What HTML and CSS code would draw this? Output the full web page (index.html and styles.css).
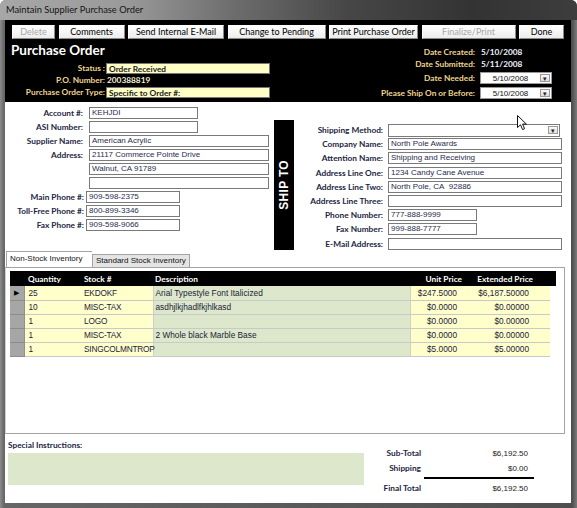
FILE: index.html
```html
<!DOCTYPE html>
<html lang="en">
<head>
    <meta charset="UTF-8" />
    <title>Maintain Supplier Purchase Order</title>
    <link rel="stylesheet" href="styles.css">
</head>
<body>
<div class="window">
    <div class="titlebar">Maintain Supplier Purchase Order</div>
    <div class="client">
        <div class="header">
            <div class="toolbar">
                <button class="btn b-delete" disabled>Delete</button>
                <button class="btn b-comments">Comments</button>
                <button class="btn b-mail">Send Internal E-Mail</button>
                <button class="btn b-pending">Change to Pending</button>
                <button class="btn b-print">Print Purchase Order</button>
                <button class="btn b-final" disabled>Finalize/Print</button>
                <button class="btn b-done">Done</button>
            </div>
            <div class="header-main">
                <div class="po-left">
                    <h1>Purchase Order</h1>
                    <div class="hgrid">
                        <span class="hlabel">Status :</span>
                        <span class="hfield">Order Received</span>
                        <span class="hlabel">P.O. Number:</span>
                        <span class="hvalue">200388819</span>
                        <span class="hlabel">Purchase Order Type:</span>
                        <span class="hfield">Specific to Order #:</span>
                    </div>
                </div>
                <div class="po-dates">
                    <span class="hlabel">Date Created:</span>
                    <span class="dvalue">5/10/2008</span>
                    <span class="hlabel">Date Submitted:</span>
                    <span class="dvalue">5/11/2008</span>
                    <span class="hlabel">Date Needed:</span>
                    <span class="dcombo"><span class="dtext">5/10/2008</span><span class="dd">&#9662;</span></span>
                    <span class="hlabel">Please Ship On or Before:</span>
                    <span class="dcombo"><span class="dtext">5/10/2008</span><span class="dd">&#9662;</span></span>
                </div>
            </div>
        </div>

        <div class="form-body">
            <div class="supplier">
                <div class="row"><span class="lbl">Account #:</span><span class="fld w-sm">KEHJDI</span></div>
                <div class="row"><span class="lbl">ASI Number:</span><span class="fld w-sm"></span></div>
                <div class="row"><span class="lbl">Supplier Name:</span><span class="fld w-lg">American Acrylic</span></div>
                <div class="row"><span class="lbl">Address:</span><span class="fld w-lg">21117 Commerce Pointe Drive</span></div>
                <div class="row"><span class="lbl"></span><span class="fld w-lg">Walnut, CA 91789</span></div>
                <div class="row"><span class="lbl"></span><span class="fld w-lg"></span></div>
                <div class="row phone"><span class="lbl">Main Phone #:</span><span class="fld w-ph">909-598-2375</span></div>
                <div class="row phone"><span class="lbl">Toll-Free Phone #:</span><span class="fld w-ph">800-899-3346</span></div>
                <div class="row phone"><span class="lbl">Fax Phone #:</span><span class="fld w-ph">909-598-9066</span></div>
            </div>
            <div class="shipbar"><span>SHIP TO</span></div>
            <div class="shipto">
                <div class="row"><span class="lbl">Shipping Method:</span><span class="fld w-xl combo"><span class="dtext"></span><span class="dd">&#9662;</span></span></div>
                <div class="row"><span class="lbl">Company Name:</span><span class="fld w-xl">North Pole Awards</span></div>
                <div class="row"><span class="lbl">Attention Name:</span><span class="fld w-xl">Shipping and Receiving</span></div>
                <div class="row"><span class="lbl">Address Line One:</span><span class="fld w-xl">1234 Candy Cane Avenue</span></div>
                <div class="row"><span class="lbl">Address Line Two:</span><span class="fld w-xl">North Pole, CA&nbsp; 92886</span></div>
                <div class="row"><span class="lbl">Address Line Three:</span><span class="fld w-xl"></span></div>
                <div class="row"><span class="lbl">Phone Number:</span><span class="fld w-ph2">777-888-9999</span></div>
                <div class="row"><span class="lbl">Fax Number:</span><span class="fld w-ph2">999-888-7777</span></div>
                <div class="row"><span class="lbl">E-Mail Address:</span><span class="fld w-xl"></span></div>
            </div>
        </div>

        <div class="tabs">
            <div class="tab active">Non-Stock Inventory</div>
            <div class="tab">Standard Stock Inventory</div>
        </div>
        <div class="panel">
            <table class="grid">
                <thead>
                    <tr>
                        <th class="c-sel"></th>
                        <th class="c-qty">Quantity</th>
                        <th class="c-stock">Stock #</th>
                        <th class="c-desc">Description</th>
                        <th class="c-unit">Unit Price</th>
                        <th class="c-ext">Extended Price</th>
                        <th class="c-pad"></th>
                    </tr>
                </thead>
                <tbody>
                    <tr>
                        <td class="c-sel current">&#9654;</td>
                        <td class="c-qty">25</td>
                        <td class="c-stock">EKDOKF</td>
                        <td class="c-desc">Arial Typestyle Font Italicized</td>
                        <td class="c-unit">$247.5000</td>
                        <td class="c-ext">$6,187.50000</td>
                        <td class="c-pad"></td>
                    </tr>
                    <tr>
                        <td class="c-sel"></td>
                        <td class="c-qty">10</td>
                        <td class="c-stock">MISC-TAX</td>
                        <td class="c-desc">asdhjlkjhadlfkjhlkasd</td>
                        <td class="c-unit">$0.0000</td>
                        <td class="c-ext">$0.00000</td>
                        <td class="c-pad"></td>
                    </tr>
                    <tr>
                        <td class="c-sel"></td>
                        <td class="c-qty">1</td>
                        <td class="c-stock">LOGO</td>
                        <td class="c-desc"></td>
                        <td class="c-unit">$0.0000</td>
                        <td class="c-ext">$0.00000</td>
                        <td class="c-pad"></td>
                    </tr>
                    <tr>
                        <td class="c-sel"></td>
                        <td class="c-qty">1</td>
                        <td class="c-stock">MISC-TAX</td>
                        <td class="c-desc">2 Whole black Marble Base</td>
                        <td class="c-unit">$0.0000</td>
                        <td class="c-ext">$0.00000</td>
                        <td class="c-pad"></td>
                    </tr>
                    <tr>
                        <td class="c-sel"></td>
                        <td class="c-qty">1</td>
                        <td class="c-stock">SINGCOLMNTROP</td>
                        <td class="c-desc"></td>
                        <td class="c-unit">$5.0000</td>
                        <td class="c-ext">$5.00000</td>
                        <td class="c-pad"></td>
                    </tr>
                </tbody>
            </table>
        </div>

        <div class="footer">
            <div class="instructions">
                <div class="lbl-plain">Special Instructions:</div>
                <div class="notes"></div>
            </div>
            <div class="totals">
                <span class="tlabel">Sub-Total</span><span class="tvalue">$6,192.50</span>
                <span class="tlabel">Shipping</span><span class="tvalue">$0.00</span>
                <span class="rule"></span>
                <span class="tlabel">Final Total</span><span class="tvalue">$6,192.50</span>
            </div>
        </div>
    </div>

    <!-- mouse pointer -->
    <svg class="cursor" width="12" height="17" viewBox="0 0 12 17">
        <path d="M0.5 0.5 L0.5 12.5 L3.5 9.8 L5.6 14.6 L7.6 13.7 L5.6 9.1 L9.4 9.1 Z" fill="#fff" stroke="#111" stroke-width="1"/>
    </svg>
</div>
</body>
</html>
```

FILE: styles.css
```css
* {
    box-sizing: border-box;
}

html, body {
    margin: 0;
    padding: 0;
}

body {
    width: 577px;
    height: 508px;
    overflow: hidden;
    background: #ffffff;
    font-family: "Liberation Sans", Arial, sans-serif;
}

.window {
    position: relative;
    width: 577px;
    height: 508px;
    padding-bottom: 5px;
    border-radius: 6px 6px 0 0;
    background: linear-gradient(to right, #8c8c8c 0, #666 4px, #5a5a5a 50%, #4e4e4e calc(100% - 5px), #7a7a7a 100%);
    overflow: hidden;
}

.titlebar {
    height: 20px;
    padding-left: 6px;
    line-height: 20px;
    font-family: Lato, "Liberation Sans", sans-serif;
    font-size: 9.3px;
    color: #151515;
    background: linear-gradient(to right, #a7a7a7 0%, #9a9a9a 22%, #6e6e6e 40%, #474747 60%, #333 82%, #3d3d3d 100%);
}

.client {
    margin: 0 6px 0 5px;
    height: 483px;
    background: #fff;
}

/* ---- black header ---- */

.header {
    height: 82px;
    background: #000;
}

.toolbar {
    display: flex;
    gap: 3.5px;
    padding: 5px 0 0 7px;
}

.btn {
    height: 14px;
    padding: 0;
    font-family: Lato, "Liberation Sans", sans-serif;
    font-size: 9px;
    line-height: 12px;
    color: #000;
    background: linear-gradient(#ffffff, #ececec);
    border: 1px solid;
    border-color: #ffffff #8a8a8a #8a8a8a #ffffff;
}

.btn:disabled {
    color: #a8a8a8;
}

.b-delete { width: 43px; }
.b-comments { width: 66px; }
.b-mail { width: 96px; }
.b-pending { width: 98px; }
.b-print { width: 89px; }
.b-final { width: 94px; }
.b-done { width: 45px; }

.header-main {
    display: flex;
    padding-top: 3px;
}

.po-left {
    padding-left: 6px;
}

h1 {
    margin: 0;
    height: 20px;
    font-family: Lato, "Liberation Sans", sans-serif;
    font-size: 13.5px;
    line-height: 16px;
    font-weight: bold;
    color: #fff;
}

.hgrid {
    display: grid;
    grid-template-columns: 95px 164px;
    grid-auto-rows: 12px;
    align-items: center;
}

.hlabel {
    font-family: Lato, "Liberation Sans", sans-serif;
    font-size: 8.3px;
    font-weight: bold;
    color: #eed590;
    text-align: right;
    white-space: nowrap;
}

.hgrid .hlabel {
    padding-right: 1px;
}

.hfield {
    height: 11px;
    padding-left: 2px;
    font-family: Lato, "Liberation Sans", sans-serif;
    font-size: 8.3px;
    font-weight: bold;
    line-height: 10px;
    color: #1a1a1a;
    background: #ffffc6;
    border: 1px solid #777;
}

.hvalue {
    padding-left: 1px;
    font-family: Lato, "Liberation Sans", sans-serif;
    font-size: 8.3px;
    font-weight: bold;
    color: #f3efd8;
}

.po-dates {
    display: grid;
    grid-template-columns: auto 72px;
    grid-template-rows: 12px 12px 14px 15px;
    column-gap: 5px;
    align-items: end;
    margin-left: auto;
    margin-right: 19px;
    padding-top: 4px;
}

.dvalue {
    padding-left: 1px;
    line-height: 12px;
    font-family: Lato, "Liberation Sans", sans-serif;
    font-size: 8.3px;
    font-weight: bold;
    color: #eef2ff;
}

.po-dates .hlabel {
    line-height: 12px;
}

.dcombo {
    display: flex;
    align-items: center;
    height: 12px;
    background: #fff;
    border: 1px solid #999;
    font-size: 8px;
    color: #111;
}

.dtext {
    flex: 1;
    text-align: center;
}

.dd {
    width: 10px;
    height: 8px;
    margin-right: 1px;
    font-size: 7px;
    line-height: 8px;
    text-align: center;
    color: #222;
    background: linear-gradient(#fafafa, #dcdcdc);
    border: 1px solid #9a9a9a;
}

/* ---- supplier / ship to ---- */

.form-body {
    display: grid;
    grid-template-columns: 269px 20px 1fr;
    height: 148px;
}

.supplier {
    padding-top: 4px;
}

.row {
    display: flex;
    align-items: center;
    height: 14px;
}

.lbl {
    flex: none;
    width: 78px;
    font-family: Lato, "Liberation Sans", sans-serif;
    font-size: 8.3px;
    font-weight: bold;
    color: #1c2541;
    text-align: right;
    white-space: nowrap;
}

.fld {
    flex: none;
    height: 12px;
    margin-left: 6px;
    padding-left: 2px;
    font-size: 8px;
    line-height: 10px;
    color: #1f2c4d;
    background: #fff;
    border: 1px solid #7a7a7a;
    white-space: nowrap;
    overflow: hidden;
}

.w-sm { width: 109px; }
.w-lg { width: 180px; }
.w-ph { width: 94px; }
.w-xl { width: 174px; }
.w-ph2 { width: 89px; }

.row.phone .lbl {
    width: 79px;
}

.row.phone .fld {
    margin-left: 2px;
}

.shipbar {
    display: flex;
    align-items: center;
    justify-content: center;
    margin-top: 18px;
    height: 130px;
    background: #000;
}

.shipbar span {
    writing-mode: vertical-rl;
    transform: rotate(180deg);
    font-size: 12px;
    font-weight: bold;
    letter-spacing: 0.3px;
    color: #fff;
}

.shipto {
    padding-top: 21px;
}

.shipto .row {
    height: 14.2px;
}

.shipto .lbl {
    width: 89px;
}

.shipto .fld {
    margin-left: 5px;
}

.fld.combo {
    display: flex;
    align-items: center;
    height: 13px;
    width: 172px;
}

/* ---- tabs and grid ---- */

.tabs {
    display: flex;
    align-items: flex-end;
    height: 17px;
    padding-left: 1px;
}

.tab {
    height: 13px;
    padding: 0 3px;
    font-size: 8px;
    line-height: 12px;
    color: #111;
    background: #e4e4e4;
    border: 1px solid #a3a3a3;
    border-bottom: none;
}

.tab.active {
    width: 86px;
    height: 16px;
    line-height: 14px;
    background: #fff;
    border-right: none;
}

.panel {
    height: 167px;
    margin-right: 6px;
    padding: 3px 0 0 4px;
    border: 1px solid #a3a3a3;
    border-left-color: #d0d0d0;
}

.grid {
    border-collapse: collapse;
    table-layout: fixed;
    width: 546px;
    font-size: 8.3px;
    color: #1c1c3a;
}

.grid th {
    height: 15px;
    padding: 0;
    font-family: Lato, "Liberation Sans", sans-serif;
    font-size: 8.3px;
    font-weight: bold;
    color: #fff;
    background: #000;
    text-align: left;
}

.grid td {
    height: 14px;
    padding: 0;
    white-space: nowrap;
    overflow: hidden;
    border-bottom: 1px solid #c9c9c9;
}

.c-sel { width: 14px; }
.c-qty { width: 58px; }
.c-stock { width: 71px; }
.c-desc { width: 257px; }
.c-unit { width: 60px; }
.c-ext { width: 80px; }
.c-pad { width: 6px; }

.grid th.c-qty,
.grid td.c-qty {
    padding-left: 4px;
}

.grid th.c-stock,
.grid td.c-stock,
.grid th.c-desc,
.grid td.c-desc {
    padding-left: 2px;
}

.grid td.c-stock {
    letter-spacing: -0.2px;
    overflow: visible;
}

.grid th.c-unit {
    text-align: right;
    padding-right: 8px;
}

.grid th.c-ext {
    text-align: right;
    padding-right: 17px;
}

.grid td.c-sel {
    font-size: 7px;
    text-align: center;
    color: #000;
    background: #a6a6a6;
    border-bottom: 1px solid #8c8c8c;
    border-right: 1px solid #909090;
}

.grid td.c-qty,
.grid td.c-stock,
.grid td.c-unit,
.grid td.c-ext {
    background: #ffffcc;
}

.grid td.c-stock,
.grid td.c-desc {
    border-right: 1px solid #cfcfcf;
}

.grid td.c-desc {
    background: #dde7cb;
}

.grid td.c-unit {
    text-align: right;
    padding-right: 13px;
}

.grid td.c-ext {
    text-align: right;
    padding-right: 21px;
}

.grid td.c-pad {
    background: #fff;
    border-bottom: none;
}

/* ---- footer ---- */

.footer {
    display: flex;
}

.instructions {
    padding: 6px 0 0 3px;
}

.lbl-plain {
    height: 10px;
    font-family: Lato, "Liberation Sans", sans-serif;
    font-size: 8.3px;
    line-height: 10px;
    font-weight: bold;
    color: #1c2541;
}

.notes {
    width: 356px;
    height: 32px;
    margin-top: 3px;
    background: #dde7cb;
}

.totals {
    display: grid;
    grid-template-columns: 46px 113px;
    grid-template-rows: 12px 12px 2px 12px;
    row-gap: 3px;
    margin-left: 11px;
    padding-top: 13px;
    align-items: center;
}

.tlabel {
    font-family: Lato, "Liberation Sans", sans-serif;
    font-size: 8.3px;
    font-weight: bold;
    color: #1c2541;
    text-align: right;
    white-space: nowrap;
}

.tvalue {
    padding-right: 6px;
    font-size: 8px;
    color: #222;
    text-align: right;
}

.rule {
    grid-column: 2;
    height: 2px;
    margin-left: 3px;
    background: #000;
}

.cursor {
    position: absolute;
    left: 517px;
    top: 115px;
}
```
